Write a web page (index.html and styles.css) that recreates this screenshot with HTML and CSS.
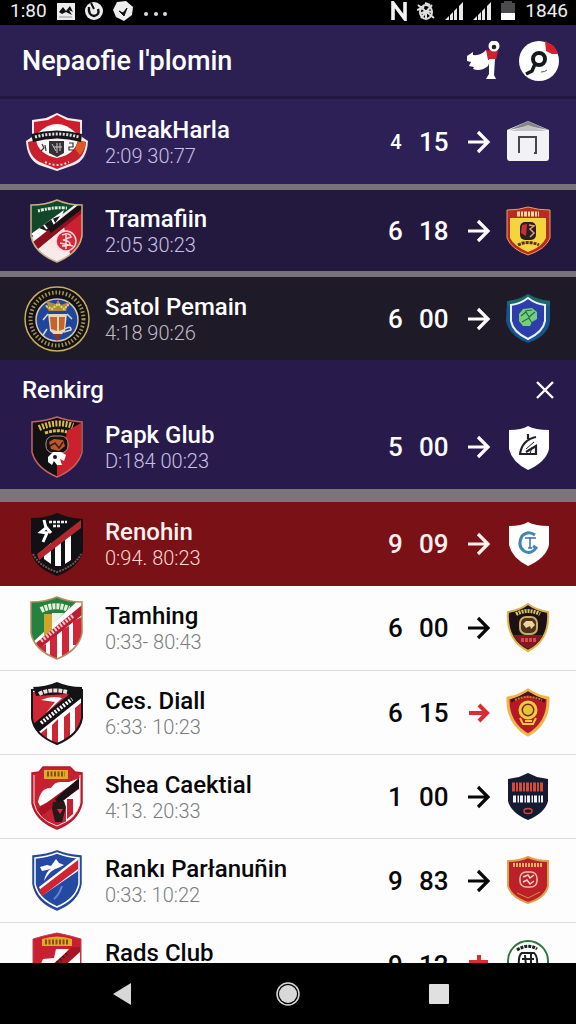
FILE: index.html
```html
<!DOCTYPE html>
<html lang="en">
<head>
  <meta charset="UTF-8" />
  <meta name="viewport" content="width=device-width, initial-scale=1" />
  <title>Nepaofie I'plomin</title>
  <link rel="stylesheet" href="styles.css">
</head>
<body>
  <svg class="defs" aria-hidden="true">
    <symbol id="arrow" viewBox="0 0 24 24">
      <path d="M1 12H20M11 2L21 12L11 22" fill="none" stroke="currentColor" stroke-width="3.2" />
    </symbol>
    <symbol id="signal" viewBox="0 0 18 18">
      <path d="M0 18L4 14V18ZM5 18V13L8 10V18ZM9 18V9L12 6V18ZM14 18V4L18 0V18Z" fill="#e8e8e8" />
    </symbol>
    <clipPath id="shield"><path d="M7 7Q22 7 33 2Q44 7 58 7V38Q55 55 33 64Q10 55 7 38Z" /></clipPath>
  </svg>

  <div class="status">
    <span>1:80</span>
    <svg width="18" height="18" viewBox="0 0 18 18"><path fill="#eee" d="M0 1H18V18H0Z" /><path d="M2 10L6 5L9 9L13 4L16 10L12 8L15 13L9 10L5 12Z" fill="#111" /><path d="M2 15H15" stroke="#999" /></svg>
    <svg width="18" height="18" viewBox="0 0 18 18"><circle cx="9" cy="9" r="9" fill="#eee" /><path d="M4 5Q3 13 9 14Q15 13 13 7" fill="none" stroke="#111" stroke-width="2.4" /><path d="M6 1L9 7" stroke="#111" stroke-width="2" /></svg>
    <svg width="20" height="20" viewBox="0 0 20 20"><path d="M4 1L13 0L20 6L19 14L11 20L3 16L0 9Z" fill="#eee" /><path d="M6 10L10 12L14 7L11 15Z" fill="#111" stroke="#111" /></svg>
    <svg width="24" height="18" viewBox="0 0 24 18"><g fill="#ddd"><circle cx="3" cy="12" r="2" /><circle cx="13" cy="12" r="2" /><circle cx="22" cy="12" r="2" /></g></svg>
    <span class="spacer"></span>
    <svg width="16" height="20" viewBox="0 0 16 20"><path d="M2 19V2L14 18V1" fill="none" stroke="#f2f2f2" stroke-width="3.6" /></svg>
    <svg width="18" height="18" viewBox="0 0 18 18" fill="none" stroke="#ddd" stroke-width="2"><ellipse cx="9" cy="10" rx="6" ry="7" /><path d="M1 3L17 16M4 16L15 3M0 8L7 5M3 12L9 9L15 10M8 1L13 3M9 9V17" /></svg>
    <svg width="18" height="18"><use href="#signal" /></svg>
    <svg width="18" height="18"><use href="#signal" /></svg>
    <svg width="14" height="20" viewBox="0 0 14 20"><path d="M0 2H3V0H11V2H14V12H0Z" fill="#4a4a4c" /><path d="M0 12H14V19H0Z" fill="#fff" /></svg>
    <span>1846</span>
  </div>

  <header class="topbar">
    <h1>Nepaofie I'plomin</h1>
    <button class="icon-button" aria-label="Mascot">
      <svg width="34" height="40" viewBox="0 0 34 40">
        <path d="M1 15L7 11V14Q15 15 20 9L26 14L22 25Q15 31 7 28L8 26L3 25L5 21L1 20Z" fill="#fff" />
        <path d="M20 9L32 10L30 19L22 19Z" fill="#d3202c" />
        <path d="M23 18H29L28 34L30 38H20L23 33Z" fill="#fff" />
        <circle cx="28" cy="5" r="5.500" fill="#fff" /><circle cx="28" cy="6" r="2.300" fill="#222" />
      </svg>
    </button>
    <button class="icon-button" aria-label="Search">
      <svg width="42" height="44" viewBox="0 0 42 44">
        <circle cx="21" cy="22" r="20" fill="#fff" />
        <path d="M27 2L36 7L40 15L34 15L28 12Z" fill="#d3202c" />
        <circle cx="21" cy="20" r="6" fill="none" stroke="#14181f" stroke-width="4" />
        <path d="M17 25L14 32L8 35" fill="none" stroke="#14181f" stroke-width="3.500" /><path d="M23 33Q27 33 29 31" fill="none" stroke="#555" />
      </svg>
    </button>
  </header>

  <main>
    <ul class="list">
      <li class="row row-first">
        <svg class="crest" viewBox="0 0 66 66">
          <path d="M8 11L22 9L33 4L44 9L58 11V28L64 32Q63 51 50 56L33 62L15 56Q3 50 2 32L8 28Z" fill="#f4eeee" />
          <path d="M10 13L24 11L33 6L43 11L56 13V28H10Z" fill="#cc1e2c" />
          <path d="M14 24Q33 6 52 24V30H14Z" fill="#fff" />
          <path d="M4 33L12 31Q14 45 33 48Q51 45 54 31L62 33Q61 49 48 54L33 60L18 54Q5 49 4 33Z" fill="#c8202d" />
          <path d="M54 32L62 33Q61 41 56 46L51 40Z" fill="#dc5b23" />
          <path d="M13 31H53Q52 45 33 49Q15 46 13 31Z" fill="#f7f7f7" />
          <path d="M7 25Q33 18 58 25L57 33Q33 26 9 33Z" fill="#17151b" />
          <path d="M11 28Q33 22 55 28" fill="none" stroke="#ddd" stroke-width="3" stroke-dasharray="2 1.500" />
          <path d="M25 32H40V44L33 48L25 44Z" fill="#343036" /><path d="M28 35L32 42M33 34V44M30 38H38M36 34V42" stroke="#d2c8c8" />
          <path d="M18 35L20 39L17 42M21 36L22 42M45 34H49V38H45V41H50" fill="none" stroke="#333" stroke-width="1.200" />
          <path d="M21 53Q33 59 45 53" fill="none" stroke="#f1d6d6" stroke-width="2" stroke-dasharray="2 2" />
        </svg>
        <div class="info"><h2>UneakHarla</h2><p>2:09 30:77</p></div>
        <span class="score score-partial">4</span><span class="points">15</span>
        <svg class="arrow"><use href="#arrow" /></svg>
        <svg class="badge" viewBox="0 0 46 50">
          <path d="M1 13L22 4L43 13V41Q43 44 40 44H4Q1 44 1 41Z" fill="#f2f2f4" /><path d="M3 13L22 4L42 13L22 9Z" fill="#85858a" /><path d="M5 14L22 8L40 14" fill="#c2c2c6" />
          <path d="M13 36V19M12 20H31M30 19V36M28 36H31" fill="none" stroke="#45454b" stroke-width="2" />
        </svg>
      </li>

      <li class="row row-dark">
        <svg class="crest" viewBox="0 0 66 66">
          <g clip-path="url(#shield)">
            <path d="M0 0H66V66H0Z" fill="#f3eded" /><path d="M0 0H60L0 45Z" fill="#11482a" />
            <path d="M7 36L40 12L35 26L14 42Z" fill="#fff" /><path d="M15 30L25 34L36 18L28 21Z" fill="#1b1b1d" /><path d="M20 27L23 31M28 21L31 27" stroke="#fff" stroke-width="2" />
            <path d="M60 12V50L47 60L40 29Z" fill="#ca2031" /><path d="M9 44L58 5V15L14 51Z" fill="#8b1120" /><path d="M24 31L58 4V11L27 35Z" fill="#161214" />
            <path d="M18 48L40 30L36 55L30 62Z" fill="#f6e9e8" />
          </g>
          <circle cx="42" cy="43" r="10" fill="#d9273a" stroke="#f9dcdc" stroke-width="1.500" /><path d="M38 37Q46 34 47 39L39 42Q47 43 46 47L38 48M42 35V51M36 45L49 48" fill="none" stroke="#ffdede" stroke-width="1.500" />
          <path d="M14 13Q28 9 43 10" fill="none" stroke="#dbeedd" stroke-width="3" stroke-dasharray="2 1 3 1" />
          <path d="M7 7Q22 7 33 2Q44 7 58 7V38Q55 55 33 64Q10 55 7 38Z" fill="none" stroke="#c8b084" stroke-width="1.500" />
        </svg>
        <div class="info"><h2>Tramafiin</h2><p>2:05 30:23</p></div>
        <span class="score">6</span><span class="points">18</span>
        <svg class="arrow"><use href="#arrow" /></svg>
        <svg class="badge" viewBox="0 0 46 50">
          <path d="M1 4Q13 4 22 1Q32 4 44 4V32Q40 43 22 49Q5 43 1 32Z" fill="#b92a22" stroke="#e6a45e" /><path d="M4 12H40V32Q36 41 22 46Q8 40 4 32Z" fill="#f6d43c" />
          <path d="M11 8H33" stroke="#f7dc9a" stroke-width="5" stroke-dasharray="3 1 2 1" /><rect x="14" y="16" width="16" height="18" rx="5" fill="#252024" />
          <path d="M16 19L21 18L20 30L15 27Z" fill="#d02c35" /><path d="M23 19L28 20L24 23L28 27L24 31" fill="none" stroke="#e79878" stroke-width="1.500" />
          <path d="M12 39Q22 34 33 39" fill="none" stroke="#5b2b25" stroke-width="3" stroke-dasharray="3 1" />
        </svg>
      </li>

      <li class="row row-black">
        <svg class="crest" viewBox="0 0 66 66">
          <circle cx="33" cy="33" r="32" fill="#111116" stroke="#c9ab5c" stroke-width="1.500" />
          <circle cx="33" cy="33" r="26.500" fill="none" stroke="#a8924a" stroke-width="4" stroke-dasharray="1.500 2" />
          <circle cx="33" cy="34" r="21" fill="#1f459c" stroke="#d5c5a4" stroke-width="1.500" />
          <path d="M20 18L25 22L22 15L32 18L34 14L37 19L45 16L42 25H25Z" fill="#ad8c3c" /><path d="M22 20L28 23L34 18L40 23L45 18" fill="none" stroke="#f0d37e" stroke-width="2" stroke-dasharray="2 1" />
          <path d="M24 28H43L41 45L34 52L26 45Z" fill="#e7d6bb" /><path d="M26 31H33V45L27 43ZM35 31H41L40 43L35 45Z" fill="#c5652b" />
          <path d="M24 28L19 34M43 28L48 33M23 43L19 49M41 43Q47 39 47 44L40 46" fill="none" stroke="#ddd8cf" stroke-width="1.500" /><path d="M29 48L33 55L38 48" fill="#8a3720" />
        </svg>
        <div class="info"><h2>Satol Pemain</h2><p>4:18 90:26</p></div>
        <span class="score">6</span><span class="points">00</span>
        <svg class="arrow"><use href="#arrow" /></svg>
        <svg class="badge" viewBox="0 0 46 50">
          <path d="M1 7Q13 6 22 0Q32 6 44 7V27Q42 42 22 49Q3 42 0 27Z" fill="#17538c" /><path d="M1 7Q13 6 22 0Q32 6 44 7V12H1Z" fill="#1d666c" />
          <path d="M5 11Q14 10 22 4Q30 10 39 11V27Q37 38 22 45Q7 38 5 27Z" fill="#2e3dac" stroke="#e9f1fb" stroke-width="2" />
          <path d="M13 20L17 15L26 14L31 18L31 25L26 28L24 32L17 32L13 27Z" fill="#75cf79" /><path d="M15 22L20 18L23 23L29 18M16 28L23 24L26 29M19 17L26 16" fill="none" stroke="#246c58" stroke-width="1.200" />
        </svg>
      </li>
    </ul>

    <section class="ranking">
      <div class="ranking-head">
        <h2>Renkirg</h2>
        <button class="close" aria-label="Close">
          <svg width="18" height="18" viewBox="0 0 18 18"><path d="M1 1L17 17M17 1L1 17" stroke="#fff" stroke-width="2.400" /></svg>
        </button>
      </div>
      <div class="row">
        <svg class="crest" viewBox="0 0 66 66">
          <path d="M8 8Q22 7 33 3Q44 7 58 8V38Q54 54 33 63Q12 54 8 38Z" fill="#121013" /><path d="M44 16L57 9V38Q54 54 33 62L33 48Z" fill="#cb202e" />
          <path d="M8 8Q22 7 33 3Q44 7 58 8V38Q54 54 33 63Q12 54 8 38Z" fill="none" stroke="#c4655d" stroke-width="1.500" />
          <path d="M15 14Q33 6 49 12" fill="none" stroke="#d7bd44" stroke-width="6" stroke-dasharray="2 1.400" /><path d="M21 19Q33 15 43 18" fill="none" stroke="#d7bd44" stroke-width="3" stroke-dasharray="3 1" />
          <rect x="22" y="22" width="22" height="17" rx="7" fill="#171214" stroke="#a79683" /><path d="M25 28L30 25L39 26L41 32L35 37L27 35Z" fill="#bd582b" /><path d="M26 32L31 29L35 34L39 28" fill="none" stroke="#3b1d19" stroke-width="1.500" />
          <path d="M24 43L29 38L37 38L42 41L40 47L36 45L38 51H33L30 47L28 51L24 48Z" fill="#fff" /><circle cx="31" cy="43" r="2" fill="#171717" />
        </svg>
        <div class="info"><h2>Papk Glub</h2><p>D:184 00:23</p></div>
        <span class="score">5</span><span class="points">00</span>
        <svg class="arrow"><use href="#arrow" /></svg>
        <svg class="badge" viewBox="0 0 46 50">
          <path d="M3 8Q16 8 22 4Q29 8 43 8V27Q40 40 22 48Q6 40 3 27Z" fill="#fff" />
          <path d="M14 32Q16 18 30 15M22 12V17M13 32H30V24L20 30" fill="none" stroke="#202127" stroke-width="2.200" /><path d="M20 27L28 20M24 32L26 25" stroke="#202127" />
        </svg>
      </div>
    </section>

    <ul class="list">
      <li class="row row-red">
        <svg class="crest" viewBox="0 0 66 66">
          <path d="M7 7Q23 7 33 2Q44 7 59 8V40Q55 57 33 65Q10 57 7 40Z" fill="#111014" />
          <path d="M20 38L27 32V53L20 48ZM31 30L37 26V55H31ZM41 23L47 19V49L41 53Z" fill="#fff" /><path d="M13 43L57 9V17L15 49Z" fill="#b2272d" />
          <path d="M20 9L22 17L17 21L23 22L19 31M22 16L27 22" fill="none" stroke="#fff" stroke-width="3" /><path d="M25 11H43M29 15H36" stroke="#eee" stroke-width="2.500" stroke-dasharray="3 1" />
          <path d="M9 43Q15 55 33 61Q51 55 57 43" fill="none" stroke="#7b5148" stroke-width="2" stroke-dasharray="2 1" />
        </svg>
        <div class="info"><h2>Renohin</h2><p>0:94. 80:23</p></div>
        <span class="score">9</span><span class="points">09</span>
        <svg class="arrow"><use href="#arrow" /></svg>
        <svg class="badge" viewBox="0 0 46 50">
          <path d="M3 7Q16 7 22 3Q29 7 43 7V26Q40 39 22 47Q6 39 3 26Z" fill="#fff" />
          <path d="M29 16Q22 11 16 17Q11 27 18 32Q25 36 30 29L27 27" fill="none" stroke="#4384ba" stroke-width="3" /><path d="M19 19H30M24 18V29M22 29H26" fill="none" stroke="#3975ad" stroke-width="1.500" />
        </svg>
      </li>

      <li class="row">
        <svg class="crest" viewBox="0 0 66 66">
          <g clip-path="url(#shield)">
            <path d="M0 0H66V66H0Z" fill="#fff" /><path d="M0 0H60L8 48Z" fill="#248240" /><path d="M20 19H28V37L20 43Z" fill="#d1a52c" /><path d="M28 18H40L28 31Z" fill="#eff3e6" />
            <path d="M58 22V50H49V26ZM45 31V66H38V35ZM33 39V66H26V45ZM22 49V60H15V53Z" fill="#cf2638" /><path d="M12 48L58 10V20L15 54Z" fill="#bf1c31" />
          </g>
          <path d="M17 46L50 20" stroke="#f6c6cb" stroke-width="4" stroke-dasharray="2 1.500" /><path d="M17 15Q31 8 45 14" fill="none" stroke="#e7f0d5" stroke-width="6" stroke-dasharray="3 1" />
          <path d="M7 7Q22 7 33 2Q44 7 58 7V38Q55 55 33 64Q10 55 7 38Z" fill="none" stroke="#b38b5d" stroke-width="1.500" />
        </svg>
        <div class="info"><h2>Tamhing</h2><p>0:33- 80:43</p></div>
        <span class="score">6</span><span class="points">00</span>
        <svg class="arrow"><use href="#arrow" /></svg>
        <svg class="badge" viewBox="0 0 46 50">
          <path d="M2 9Q14 7 22 1Q30 7 42 9Q44 37 22 48Q0 37 2 9Z" fill="#1c1214" stroke="#ddb54a" stroke-width="2" /><path d="M7 32H37Q31 43 22 46Q12 41 7 32Z" fill="#841821" />
          <path d="M10 11Q22 5 34 11" fill="none" stroke="#dabc6a" stroke-width="4" stroke-dasharray="2 1" /><rect x="14" y="14" width="17" height="17" rx="6" fill="#4c3320" stroke="#c6ad65" stroke-width="2" />
          <path d="M17 21L20 18H26L29 22L25 26L24 23L20 25Z" fill="#efd4a0" /><path d="M15 37H30" stroke="#d54b4c" stroke-width="4" stroke-dasharray="3 1" />
        </svg>
      </li>

      <li class="row">
        <svg class="crest" viewBox="0 0 66 66">
          <g clip-path="url(#shield)">
            <path d="M0 0H66V66H0Z" fill="#fff" /><path d="M0 12H56L10 50Z" fill="#ce2735" /><path d="M17 20Q28 15 38 18L22 33L31 22Z" fill="#fff" />
            <path d="M58 22V50H51V28ZM46 32V66H40V37ZM34 39V66H28V45ZM23 48V60H17V53Z" fill="#cc2635" /><path d="M7 0H58V16L42 14L12 16Z" fill="#141214" /><path d="M10 46L50 13L58 15L14 50Z" fill="#141214" stroke="#141214" stroke-width="4" />
          </g>
          <path d="M17 43L48 19" stroke="#fff" stroke-width="4" stroke-dasharray="2 1.500" /><path d="M15 14Q25 8 43 12" fill="none" stroke="#f0dede" stroke-width="4" stroke-dasharray="4 1" />
          <path d="M8 10Q23 9 33 5Q43 9 58 10V38Q55 55 33 64Q10 55 8 38Z" fill="none" stroke="#16151a" stroke-width="2" />
        </svg>
        <div class="info"><h2>Ces. Diall</h2><p>6:33· 10:23</p></div>
        <span class="score">6</span><span class="points">15</span>
        <svg class="arrow arrow-red" viewBox="0 0 24 24"><path d="M2 12H20M12 4L20 12L12 20" fill="none" stroke="currentColor" stroke-width="4" /></svg>
        <svg class="badge" viewBox="0 0 46 50">
          <path d="M2 10Q14 8 22 2Q30 8 42 10Q43 35 22 47Q1 35 2 10Z" fill="#b71825" stroke="#efb54b" stroke-width="3" /><path d="M5 13Q14 10 22 5Q30 10 39 13" fill="none" stroke="#471515" stroke-width="3" />
          <path d="M9 12Q22 6 36 12" fill="none" stroke="#c67839" stroke-width="2" stroke-dasharray="2 1" /><circle cx="22" cy="22" r="8" fill="#7d2422" stroke="#f1cc3b" stroke-width="3" /><circle cx="22" cy="22" r="5" fill="#e6c437" />
          <path d="M14 30L17 36H27L30 30M19 33H26" fill="none" stroke="#f1cc3b" stroke-width="2" />
        </svg>
      </li>

      <li class="row">
        <svg class="crest" viewBox="0 0 66 66">
          <path d="M8 9L15 8L19 3H46L51 8L58 9V39Q54 57 33 65Q11 56 8 39Z" fill="#c92031" stroke="#b31b2a" stroke-width="1.500" />
          <path d="M14 38Q17 23 27 24Q31 17 38 18L45 18L56 14V41Q51 54 42 58V45L37 32L16 42Z" fill="#fff" /><path d="M14 45L55 15V25L17 52Z" fill="#a91525" /><path d="M31 35L55 14V24L34 41Z" fill="#1a1216" />
          <path d="M29 38L40 37L42 43L38 58H31L28 45Z" fill="#29171a" /><path d="M33 45H39L36 50Z" fill="#d63343" /><path d="M43 35H49V50L43 55ZM17 54L23 48V59Z" fill="#c92031" />
          <path d="M20 6H44V15H20Z" fill="#e3ab24" /><path d="M23 10H41" stroke="#8f481e" stroke-width="5" stroke-dasharray="2 1.500" />
          <path d="M10 11V39Q13 55 33 62Q52 55 56 39V11" fill="none" stroke="#f6dfe0" />
        </svg>
        <div class="info"><h2>Shea Caektial</h2><p>4:13. 20:33</p></div>
        <span class="score">1</span><span class="points">00</span>
        <svg class="arrow"><use href="#arrow" /></svg>
        <svg class="badge" viewBox="0 0 46 50">
          <path d="M2 7L13 5L22 1L31 5L42 7V29Q39 41 22 48Q5 41 2 29Z" fill="#141b32" /><path d="M6 15H37" stroke="#d44c33" stroke-width="9" stroke-dasharray="3 1 2 1" />
          <path d="M7 27H37" stroke="#f1f1f4" stroke-width="7" stroke-dasharray="3 1.500 1.500 1" /><ellipse cx="22" cy="39" rx="4" ry="2.500" fill="none" stroke="#c7493d" stroke-width="1.500" />
        </svg>
      </li>

      <li class="row">
        <svg class="crest" viewBox="0 0 66 66">
          <path d="M9 8Q23 7 33 3Q43 7 57 8V36Q54 54 33 62Q12 54 9 36Z" fill="#2349a3" stroke="#24499a" stroke-width="1.500" /><path d="M11 10Q23 9 33 5Q43 9 55 10V36Q52 51 33 59Q14 51 11 36Z" fill="none" stroke="#fff" stroke-width="1.500" />
          <path d="M15 39L54 9V23L19 47Z" fill="#fff" /><path d="M15 42L54 12V21L18 48Z" fill="#cf2532" />
          <path d="M16 19L23 17L27 18L32 11L35 15L40 17L34 20Q27 21 20 33Q22 23 27 21L18 23Z" fill="#fff" /><path d="M30 51Q35 47 38 38" fill="none" stroke="#6286ce" stroke-width="2" />
        </svg>
        <div class="info"><h2>Rankı Parłanuñin</h2><p>0:33: 10:22</p></div>
        <span class="score">9</span><span class="points">83</span>
        <svg class="arrow"><use href="#arrow" /></svg>
        <svg class="badge" viewBox="0 0 46 50">
          <path d="M2 5Q14 5 22 1Q31 5 42 5V30Q39 42 22 47Q5 41 2 30Z" fill="#ba2227" stroke="#dfa249" stroke-width="2" /><path d="M7 9H36" stroke="#e9ad6a" stroke-width="4" stroke-dasharray="2 1" />
          <rect x="14" y="16" width="17" height="15" rx="6" fill="none" stroke="#edbdad" stroke-width="1.500" /><path d="M17 21L22 19L24 22L28 19M17 26L21 24L24 28L28 25" fill="none" stroke="#f6d7c9" stroke-width="1.500" /><path d="M11 37L22 42L34 36" fill="none" stroke="#dd8b3e" />
        </svg>
      </li>

      <li class="row">
        <svg class="crest" viewBox="0 0 66 66">
          <path d="M9 7Q22 3 33 1Q44 3 57 7V40Q54 57 33 65Q11 56 9 40Z" fill="#c92031" stroke="#b9434d" />
          <path d="M32 17H45L40 23L56 20V45H44L48 31L28 42L15 36L19 27L30 26Z" fill="#fff" /><path d="M15 45L48 15H56V20L25 48Z" fill="#a81624" /><path d="M24 39L45 20" stroke="#422022" stroke-width="3" stroke-dasharray="2 2" />
          <path d="M18 7Q33 2 48 7V14H18Z" fill="#e3ab24" /><path d="M21 10H45" stroke="#8f481e" stroke-width="5" stroke-dasharray="2 1.500" />
        </svg>
        <div class="info"><h2>Rads Club</h2></div>
        <span class="score">9</span><span class="points">12</span>
        <svg class="arrow arrow-red" viewBox="0 0 24 24"><path d="M2 9H21M12 2V22" fill="none" stroke="currentColor" stroke-width="4" /></svg>
        <svg class="badge" viewBox="0 0 46 50">
          <circle cx="22" cy="21" r="20" fill="#fff" stroke="#2f7442" stroke-width="2" /><path d="M11 10Q22 3 31 9" fill="none" stroke="#1d2120" stroke-width="3" stroke-dasharray="3 1" />
          <path d="M13 27Q12 15 16 13H28Q32 16 31 27M19 15L20 26M25 14V26M16 19H28" fill="none" stroke="#1d2120" stroke-width="2" />
        </svg>
      </li>
    </ul>
  </main>

  <nav class="navbar">
    <button aria-label="Back"><svg width="24" height="24" viewBox="0 0 24 24"><path d="M2 12L20 1V23Z" fill="#d8d8d8" /></svg></button>
    <button aria-label="Home"><svg width="24" height="24" viewBox="0 0 24 24"><circle cx="12" cy="12" r="11" fill="none" stroke="#d8d8d8" stroke-width="1.500" /><circle cx="12" cy="12" r="9" fill="#d8d8d8" /></svg></button>
    <button class="nav-recent" aria-label="Recent apps"><svg width="24" height="24" viewBox="0 0 24 24"><rect x="2" y="2" width="20" height="20" rx="1" fill="#e0e0e0" /></svg></button>
  </nav>
</body>
</html>
```
FILE: styles.css
```css
* {
  box-sizing: border-box;
}

body {
  display: flex;
  flex-direction: column;
  height: 100vh;
  margin: 0;
  background: #fdfdfd;
  color: #fff;
  font-family: Roboto, "Liberation Sans", sans-serif;
  overflow: hidden;
}

h1, h2, p, ul {
  margin: 0;
  padding: 0;
}

button {
  display: flex;
  padding: 0;
  border: none;
  background: none;
  cursor: pointer;
}

svg {
  flex-shrink: 0;
}

.defs {
  position: absolute;
  width: 0;
  height: 0;
}

.status {
  display: flex;
  flex-shrink: 0;
  align-items: center;
  gap: 10px;
  height: 25px;
  padding: 0 8px 4px 10px;
  background: #000;
  color: #eee;
  font-size: 19px;
  line-height: 20px;
}

.spacer {
  flex: 1;
}

.topbar {
  display: flex;
  flex-shrink: 0;
  align-items: center;
  gap: 18px;
  height: 74px;
  padding: 0 16px 0 22px;
  background: #2c2053;
  border-bottom: 3px solid #211841;
}

h1 {
  flex: 1;
  font-size: 27px;
  font-weight: 500;
  line-height: 32px;
}

main {
  flex: 1;
  overflow: hidden;
}

.list {
  list-style: none;
}

.row {
  display: flex;
  align-items: center;
  gap: 15px;
  height: 84px;
  padding: 0 24px;
}

.list .row {
  border-top: 1px solid #dcdcde;
  color: #08080a;
}

.list .row-first,
.list .row-dark {
  height: 91px;
  border-top: none;
  border-bottom: 6px solid #78727a;
  background: #2d2056;
  color: #fff;
}

.list .row-dark {
  height: 87px;
  background: #23193f;
}

.list .row-black {
  height: 83px;
  border: none;
  background: #1f1a27;
  color: #fff;
}

.list .row-red {
  border: none;
  background: #791116;
  color: #fff0ee;
}

.list .row-red + .row {
  border: none;
}

.crest {
  width: 66px;
  height: 66px;
}

.badge {
  width: 46px;
  height: 50px;
}

.info {
  flex: 1;
  min-width: 0;
  height: 52px;
}

.info h2 {
  font-size: 24px;
  font-weight: 500;
  line-height: 28px;
  white-space: nowrap;
}

.info p {
  color: #7c7c80;
  font-size: 20px;
  font-weight: 300;
  line-height: 24px;
}

.row-first p,
.row-dark p,
.ranking p {
  color: #c9c0e2;
}

.row-black p {
  color: #c0bcc6;
}

.row-red p {
  color: #ffd6d3;
}

.score,
.points {
  width: 16px;
  font-size: 26px;
  font-weight: 500;
  line-height: 32px;
}

.points {
  width: 33px;
}

.score-partial {
  font-size: 20px;
  text-align: center;
}

.arrow {
  width: 24px;
  height: 24px;
}

.arrow-red {
  color: #d92c35;
}

.ranking {
  background: #281b4c;
  border-bottom: 13px solid #7a7578;
}

.ranking-head {
  display: flex;
  align-items: center;
  justify-content: space-between;
  height: 45px;
  padding: 14px 22px 0;
}

.ranking-head h2 {
  font-size: 24px;
  font-weight: 500;
  line-height: 28px;
}

.navbar {
  display: grid;
  flex-shrink: 0;
  grid-template-columns: 1fr 86px 1fr;
  height: 61px;
  background: #000;
}

.navbar button {
  align-items: center;
  justify-content: center;
}

.navbar .nav-recent {
  padding-right: 30px;
}
```
